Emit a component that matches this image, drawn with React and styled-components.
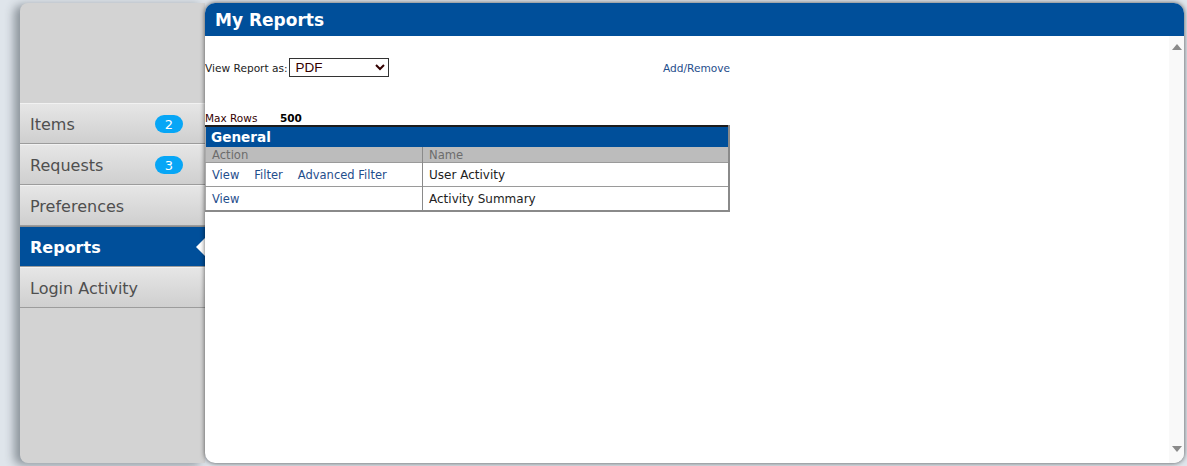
import React from "react";
import styled, { createGlobalStyle } from "styled-components";

const Global = createGlobalStyle`
  html, body { margin: 0; padding: 0; }
  body {
    background: #dfe5eb;
    font-family: "DejaVu Sans", Verdana, sans-serif;
    width: 1187px;
    height: 466px;
    overflow: hidden;
  }
`;

const Page = styled.div`
  display: flex;
  box-sizing: border-box;
  height: 466px;
  padding: 3px 3px 3px 20px;
`;

const Sidebar = styled.nav`
  width: 185px;
  flex: none;
  background: #d3d3d3;
  border-radius: 8px 0 0 8px;
  box-shadow: -6px 2px 10px rgba(40, 50, 60, 0.45);
  padding-top: 100px;
  display: flex;
  flex-direction: column;
  position: relative;
  z-index: 0;
`;

const NavItem = styled.div`
  position: relative;
  height: 41px;
  box-sizing: border-box;
  display: flex;
  align-items: center;
  justify-content: space-between;
  padding: 1px 22px 0 10px;
  font-size: 16px;
  color: ${(p) => (p.$active ? "#ffffff" : "#4f4f4f")};
  font-weight: ${(p) => (p.$active ? "bold" : "normal")};
  background: ${(p) =>
    p.$active ? "#004f9a" : "linear-gradient(#e6e6e6, #cfcfcf)"};
  border-top: 1px solid ${(p) => (p.$active ? "#8c8c8c" : "#f2f2f2")};
  border-bottom: 1px solid #9c9c9c;
`;

const Badge = styled.span`
  display: inline-flex;
  align-items: center;
  justify-content: center;
  width: 28px;
  height: 18px;
  border-radius: 9px;
  background: #07a6f6;
  color: #fff;
  font-size: 13px;
  font-weight: normal;
`;

const Pointer = styled.span`
  position: absolute;
  right: 0;
  top: 50%;
  margin-top: -9px;
  width: 0;
  height: 0;
  border-top: 9px solid transparent;
  border-bottom: 9px solid transparent;
  border-right: 9px solid #ffffff;
`;

const Main = styled.section`
  flex: 1;
  display: flex;
  flex-direction: column;
  background: #fff;
  border-radius: 10px;
  box-shadow: 0 0 5px rgba(0, 0, 0, 0.65);
  overflow: hidden;
  position: relative;
  z-index: 1;
`;

const Header = styled.header`
  height: 33px;
  flex: none;
  background: #004f9a;
  color: #fff;
  font-weight: bold;
  font-size: 17px;
  display: flex;
  align-items: center;
  padding-left: 10px;
`;

const Body = styled.div`
  flex: 1;
  display: flex;
`;

const Content = styled.div`
  flex: 1;
`;

const Block = styled.div`
  width: 525px;
`;

const FormRow = styled.div`
  display: flex;
  align-items: center;
  justify-content: space-between;
  margin-top: 22px;
  height: 19px;
`;

const Label = styled.label`
  display: flex;
  align-items: center;
  font-size: 10.6px;
  color: #222;
`;

const Select = styled.select`
  width: 100px;
  height: 19px;
  margin: 0 0 0 1px;
  padding: 0 2px;
  border: 1px solid #333;
  border-radius: 0;
  background: #fff;
  font-family: "Liberation Sans", Arial, sans-serif;
  font-size: 13.5px;
  color: #300;
`;

const Link = styled.a`
  color: #1f4e8c;
  text-decoration: none;
  font-size: ${(p) => p.$size || "10.6px"};
  cursor: pointer;
`;

const MaxRows = styled.div`
  display: flex;
  margin-top: 35px;
  font-size: 10.5px;
  line-height: 13px;
  color: #300;
`;

const MaxLabel = styled.span`
  width: 75px;
`;

const MaxValue = styled.span`
  font-weight: bold;
  color: #000;
`;

const Table = styled.table`
  width: 525px;
  border-collapse: collapse;
  border-top: 2px solid #1c1c1c;
  border-left: 1px solid #aaa;
  border-right: 2px solid #8a8a8a;
  border-bottom: 2px solid #8a8a8a;
`;

const TitleCell = styled.th`
  background: #004f9a;
  color: #fff;
  text-align: left;
  font-size: 13.6px;
  font-weight: bold;
  height: 20px;
  padding: 0 5px;
`;

const HeadCell = styled.th`
  background: #bcbcbc;
  color: #6c6c6c;
  text-align: left;
  font-weight: normal;
  font-size: 11.6px;
  height: 15px;
  padding: 0 6px;
  border-left: 1px solid #8a8a8a;
  &:first-child { border-left: none; width: 204px; }
`;

const Cell = styled.td`
  height: 23px;
  padding: 0 6px;
  font-size: 12px;
  color: #222;
  border-top: 1px solid #9a9a9a;
  border-left: 1px solid #8a8a8a;
  &:first-child { border-left: none; }
`;

const Links = styled.div`
  display: flex;
  gap: 15px;
`;

const Scrollbar = styled.div`
  width: 15px;
  flex: none;
  background: #f9f9f9;
  display: flex;
  flex-direction: column;
  justify-content: space-between;
  align-items: center;
  padding: 8px 0 11px;
`;

const Arrow = ({ down }) => (
  <svg width="10" height="6" viewBox="0 0 10 6">
    <polygon
      points={down ? "0,0 10,0 5,6" : "5,0 10,6 0,6"}
      fill="#8a8a8a"
    />
  </svg>
);

const navItems = [
  { label: "Items", badge: 2 },
  { label: "Requests", badge: 3 },
  { label: "Preferences" },
  { label: "Reports", active: true },
  { label: "Login Activity" },
];

export default function App() {
  return (
    <>
      <Global />
      <Page>
        <Sidebar>
          {navItems.map((n) => (
            <NavItem key={n.label} $active={n.active}>
              <span>{n.label}</span>
              {n.badge && <Badge>{n.badge}</Badge>}
              {n.active && <Pointer />}
            </NavItem>
          ))}
        </Sidebar>
        <Main>
          <Header>My Reports</Header>
          <Body>
            <Content>
              <Block>
                <FormRow>
                  <Label>
                    View Report as:
                    <Select defaultValue="PDF">
                      <option>PDF</option>
                      <option>Excel</option>
                      <option>CSV</option>
                    </Select>
                  </Label>
                  <Link>Add/Remove</Link>
                </FormRow>
                <MaxRows>
                  <MaxLabel>Max Rows</MaxLabel>
                  <MaxValue>500</MaxValue>
                </MaxRows>
                <Table>
                  <thead>
                    <tr>
                      <TitleCell colSpan={2}>General</TitleCell>
                    </tr>
                    <tr>
                      <HeadCell>Action</HeadCell>
                      <HeadCell>Name</HeadCell>
                    </tr>
                  </thead>
                  <tbody>
                    <tr>
                      <Cell>
                        <Links>
                          <Link $size="11.5px">View</Link>
                          <Link $size="11.5px">Filter</Link>
                          <Link $size="11.5px">Advanced Filter</Link>
                        </Links>
                      </Cell>
                      <Cell>User Activity</Cell>
                    </tr>
                    <tr>
                      <Cell>
                        <Links>
                          <Link $size="11.5px">View</Link>
                        </Links>
                      </Cell>
                      <Cell>Activity Summary</Cell>
                    </tr>
                  </tbody>
                </Table>
              </Block>
            </Content>
            <Scrollbar>
              <Arrow />
              <Arrow down />
            </Scrollbar>
          </Body>
        </Main>
      </Page>
    </>
  );
}
